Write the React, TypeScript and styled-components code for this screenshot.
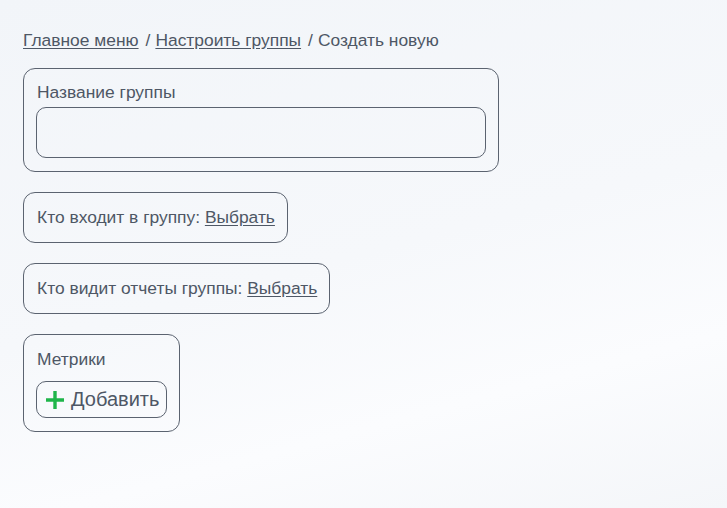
import * as React from 'react';
import styled, { createGlobalStyle } from 'styled-components';

const GlobalStyle = createGlobalStyle`
html, body {
    margin: 0;
    padding: 0;
    height: 100%;
}
body {
    font-family: "Liberation Sans", Arial, sans-serif;
    color: #4e5765;
    background: linear-gradient(165deg, #f2f5f9 0%, #f6f8fb 50%, #fbfcfe 75%, #f4f6f9 100%);
}
`;

const Page = styled.div`
min-height: 508px;
padding: 29px 23px;
box-sizing: border-box;
display: flex;
flex-direction: column;
align-items: flex-start;
gap: 20px;
`;

const Crumbs = styled.nav`
display: flex;
align-items: center;
font-size: 17.4px;
line-height: 22px;
margin-bottom: -3px;
a {
    color: #4e5765;
    text-decoration: underline;
    text-underline-offset: 2px;
}
span {
    margin: 0 5px 0 7px;
}
`;

const Card = styled.div<{ width?: number; gap?: number }>`
box-sizing: border-box;
display: flex;
flex-direction: column;
align-items: flex-start;
gap: ${props => props.gap ?? 0}px;
width: ${props => (props.width ? `${props.width}px` : 'auto')};
border: 1px solid #5b6370;
border-radius: 12px;
padding: 12px 12px 13px 12px;
font-size: 17.4px;
line-height: 24px;
& > div {
    padding-left: 1px;
}
a {
    color: #4e5765;
    text-decoration: underline;
    text-underline-offset: 2px;
}
`;

const Label = styled.div`
line-height: 22px;
`;

const TextInput = styled.input`
box-sizing: border-box;
width: 100%;
height: 51px;
border: 1px solid #5b6370;
border-radius: 10px;
background: transparent;
outline: none;
font: inherit;
padding: 0 12px;
`;

const AddButton = styled.button`
display: flex;
align-items: center;
gap: 6px;
height: 37px;
padding: 0 7px 0 8px;
border: 1px solid #5b6370;
border-radius: 10px;
background: transparent;
color: #4e5765;
font-family: "Liberation Sans", Arial, sans-serif;
font-size: 20px;
cursor: pointer;
`;

const Plus = () => (
    <svg width="20" height="20" viewBox="0 0 20 20">
        <path d="M10 1v18M1 10h18" stroke="#1fb54a" strokeWidth="3.4" />
    </svg>
);

const App: React.FC = () => {
    return (<>
        <GlobalStyle />
        <Page>
            <Crumbs>
                <a href="#">Главное меню</a>
                <span>/</span>
                <a href="#">Настроить группы</a>
                <span>/</span>
                Создать новую
            </Crumbs>
            <Card width={476} gap={4}>
                <Label>Название группы</Label>
                <TextInput />
            </Card>
            <Card>
                <div>Кто входит в группу: <a href="#">Выбрать</a></div>
            </Card>
            <Card>
                <div>Кто видит отчеты группы: <a href="#">Выбрать</a></div>
            </Card>
            <Card gap={10}>
                <div>Метрики</div>
                <AddButton><Plus />Добавить</AddButton>
            </Card>
        </Page>
    </>);
};

export default App;
